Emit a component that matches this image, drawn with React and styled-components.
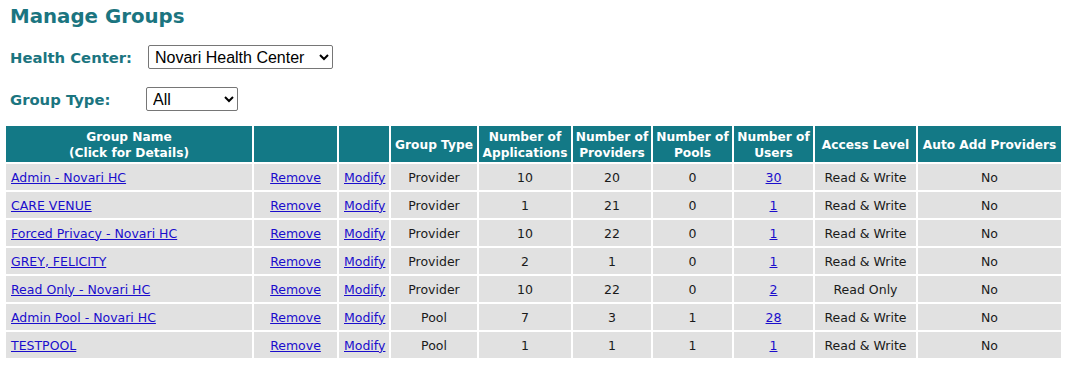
import React from 'react';
import styled, { createGlobalStyle } from 'styled-components';

const GlobalStyle = createGlobalStyle`
  body {
    margin: 0;
    background: #fff;
    font-family: 'DejaVu Sans', Verdana, sans-serif;
  }
`;

const Page = styled.div`
  padding: 5px 4px 0;
`;

const Title = styled.h1`
  margin: 0 0 0 6px;
  font-size: 19.8px;
  line-height: 24px;
  font-weight: bold;
  color: #1b7580;
`;

const Filters = styled.div`
  display: flex;
  flex-direction: column;
  gap: 18px;
  margin: 16px 0 13px 6px;
`;

const FilterRow = styled.div`
  display: flex;
  align-items: center;
`;

const Label = styled.label`
  width: ${({ w }) => w}px;
  font-size: 14.8px;
  font-weight: bold;
  color: #1b7580;
`;

const Select = styled.select`
  font-family: 'Liberation Sans', Arial, sans-serif;
  font-size: 16px;
  height: ${({ h }) => h}px;
  width: ${({ w }) => w}px;
  padding: 0 2px;
  border: 1px solid #767676;
  border-radius: 2px;
  background: #fff;
  color: #000;
`;

const Table = styled.table`
  border-spacing: 2px;
  table-layout: fixed;
  width: 1059px;
`;

const Th = styled.th`
  width: ${({ w }) => w}px;
  height: 35px;
  padding: 1px 0 0;
  background: #137986;
  color: #fff;
  font-size: 12.2px;
  line-height: 16px;
  font-weight: bold;
  text-align: center;
  white-space: nowrap;
  overflow: hidden;
`;

const Td = styled.td`
  height: 26px;
  padding: 0 5px;
  background: #e1e1e1;
  color: #1a1a1a;
  font-size: 12.5px;
  text-align: ${({ left }) => (left ? 'left' : 'center')};
  white-space: nowrap;
`;

const A = styled.a`
  color: #1a0dcc;
  text-decoration: underline;
  cursor: pointer;
`;

const groups = [
  { name: 'Admin - Novari HC', type: 'Provider', apps: 10, prov: 20, pools: 0, users: 30, access: 'Read & Write' },
  { name: 'CARE VENUE', type: 'Provider', apps: 1, prov: 21, pools: 0, users: 1, access: 'Read & Write' },
  { name: 'Forced Privacy - Novari HC', type: 'Provider', apps: 10, prov: 22, pools: 0, users: 1, access: 'Read & Write' },
  { name: 'GREY, FELICITY', type: 'Provider', apps: 2, prov: 1, pools: 0, users: 1, access: 'Read & Write' },
  { name: 'Read Only - Novari HC', type: 'Provider', apps: 10, prov: 22, pools: 0, users: 2, access: 'Read Only' },
  { name: 'Admin Pool - Novari HC', type: 'Pool', apps: 7, prov: 3, pools: 1, users: 28, access: 'Read & Write' },
  { name: 'TESTPOOL', type: 'Pool', apps: 1, prov: 1, pools: 1, users: 1, access: 'Read & Write' },
];

export default function App() {
  return (
    <Page>
      <GlobalStyle />
      <Title>Manage Groups</Title>
      <Filters>
        <FilterRow>
          <Label w={138}>Health Center:</Label>
          <Select w={185} h={24} defaultValue="n">
            <option value="n">Novari Health Center</option>
          </Select>
        </FilterRow>
        <FilterRow>
          <Label w={136}>Group Type:</Label>
          <Select w={92} h={24} defaultValue="all">
            <option value="all">All</option>
            <option value="provider">Provider</option>
            <option value="pool">Pool</option>
          </Select>
        </FilterRow>
      </Filters>
      <Table>
        <thead>
          <tr>
            <Th w={246}>Group Name<br />(Click for Details)</Th>
            <Th w={83}></Th>
            <Th w={50}></Th>
            <Th w={86}>Group Type</Th>
            <Th w={92}>Number of<br />Applications</Th>
            <Th w={78}>Number of<br />Providers</Th>
            <Th w={79}>Number of<br />Pools</Th>
            <Th w={79}>Number of<br />Users</Th>
            <Th w={101}>Access Level</Th>
            <Th w={143}>Auto Add Providers</Th>
          </tr>
        </thead>
        <tbody>
          {groups.map((g) => (
            <tr key={g.name}>
              <Td left><A>{g.name}</A></Td>
              <Td><A>Remove</A></Td>
              <Td><A>Modify</A></Td>
              <Td>{g.type}</Td>
              <Td>{g.apps}</Td>
              <Td>{g.prov}</Td>
              <Td>{g.pools}</Td>
              <Td><A>{g.users}</A></Td>
              <Td>{g.access}</Td>
              <Td>No</Td>
            </tr>
          ))}
        </tbody>
      </Table>
    </Page>
  );
}
